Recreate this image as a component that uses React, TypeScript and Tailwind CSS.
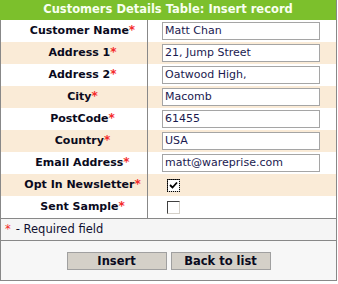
import { FC } from "react";

type Field = { label: string; value?: string; kind: "text" | "check"; checked?: boolean };

const fields: Field[] = [
  { label: "Customer Name", value: "Matt Chan", kind: "text" },
  { label: "Address 1", value: "21, Jump Street", kind: "text" },
  { label: "Address 2", value: "Oatwood High,", kind: "text" },
  { label: "City", value: "Macomb", kind: "text" },
  { label: "PostCode", value: "61455", kind: "text" },
  { label: "Country", value: "USA", kind: "text" },
  { label: "Email Address", value: "matt@wareprise.com", kind: "text" },
  { label: "Opt In Newsletter", kind: "check", checked: true },
  { label: "Sent Sample", kind: "check", checked: false },
];

const CheckBox: FC<{ checked?: boolean }> = ({ checked }) => (
  <div className={checked ? "ml-[5px] outline-1 outline-dotted outline-black outline-offset-[-1px]" : "ml-[5px]"}>
    <div className="w-[13px] h-[13px] border-t border-l border-t-[#404040] border-l-[#404040] border-r border-b border-r-[#d4d0c8] border-b-[#d4d0c8] bg-white flex items-center justify-center">
      {checked && (
        <svg width="9" height="9" viewBox="0 0 9 9">
          <path d="M1 4 L3.5 6.5 L8 1.5" stroke="#000" strokeWidth="1.8" fill="none" />
        </svg>
      )}
    </div>
  </div>
);

const App: FC = () => {
  return (
    <div className="w-[338px] h-[284px] bg-white" style={{ fontFamily: '"DejaVu Sans", Verdana, sans-serif' }}>
      <div className="w-[337px] border-r border-[#888]">
        <div className="h-[20px] bg-[#7cc02c] text-[#f8fff0] font-bold text-[11.5px] flex items-center justify-center">
          Customers Details Table: Insert record
        </div>
        <div className="border-l border-b border-[#888]">
          {fields.map((f, i) => (
            <div key={f.label} className={`flex h-[22px] ${i % 2 === 1 ? "bg-[#faebd7]" : "bg-white"}`}>
              <div className="w-[147px] border-r border-[#888] pl-[17px] flex items-center justify-center font-bold text-[11px] text-[#0a0a20]">
                {f.label}
                <span className="text-[#f42a2a] font-bold text-[12px] -mt-[2px]">*</span>
              </div>
              <div className="flex-1 pl-[14px] flex items-center">
                {f.kind === "text" ? (
                  <div className="w-[158px] h-[18px] border border-[#a5a5a5] bg-white px-[2px] flex items-center text-[11px] text-[#1a1a50]">
                    {f.value}
                  </div>
                ) : (
                  <CheckBox checked={f.checked} />
                )}
              </div>
            </div>
          ))}
          <div className="h-[22px] border-t border-[#888] bg-[#f5f5f5] flex items-center pl-[4px] text-[11.5px] text-[#101030]">
            <span className="text-[#f42a2a] mr-[5px]">*</span>- Required field
          </div>
          <div className="h-[40px] border-t border-[#888] bg-[#f7f7f7] flex items-center justify-center gap-[4px]">
            <button className="w-[100px] h-[18px] bg-[#d4d0c8] border border-[#a0a0a0] font-bold text-[11.5px] text-[#0a0a20]">
              Insert
            </button>
            <button className="w-[100px] h-[18px] bg-[#d4d0c8] border border-[#a0a0a0] font-bold text-[11.5px] text-[#0a0a20]">
              Back to list
            </button>
          </div>
        </div>
      </div>
    </div>
  );
};

export default App;
